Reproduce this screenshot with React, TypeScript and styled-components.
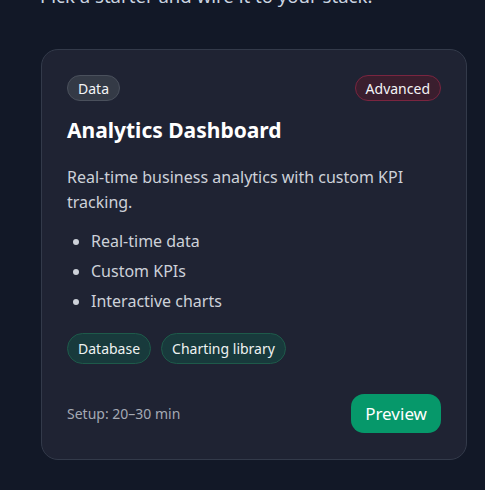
import React from "react";
import styled, { createGlobalStyle } from "styled-components";

const Global = createGlobalStyle`
  html, body { margin: 0; padding: 0; background: #121827; }
  body { font-family: "Noto Sans", "Open Sans", sans-serif; color: #e5e7eb; }
  * { box-sizing: border-box; }
`;

const Page = styled.div`
  display: flex;
  flex-direction: column;
  padding: 0 18px 30px 41px;
  margin-top: -16px;
`;

const Lead = styled.p`
  margin: 0 0 41px -1px;
  font-size: 18.6px;
  line-height: 24px;
  color: #cbd5e1;
`;

const Card = styled.div`
  width: 426px;
  background: #1f2333;
  border: 1px solid #333a4a;
  border-radius: 17px;
  padding: 25px 25px 26px;
  display: flex;
  flex-direction: column;
`;

const TopRow = styled.div`
  display: flex;
  justify-content: space-between;
  align-items: center;
`;

const Badge = styled.span<{ $tone: "neutral" | "danger" }>`
  display: inline-flex;
  align-items: center;
  height: 26px;
  padding: 0 10px;
  border-radius: 13px;
  font-size: 14px;
  color: #f3f4f6;
  background: ${(p) => (p.$tone === "danger" ? "#3a1e2e" : "#343a46")};
  border: 1px solid ${(p) => (p.$tone === "danger" ? "#7a2540" : "#4a505c")};
`;

const Title = styled.h2`
  margin: 15px 0 0 0;
  font-size: 21px;
  line-height: 29px;
  font-weight: 700;
  color: #ffffff;
`;

const Desc = styled.p`
  margin: 20px 0 0 0;
  font-size: 16px;
  line-height: 25px;
  color: #cdd1d9;
`;

const List = styled.ul`
  margin: 14px 0 0 0;
  padding: 0 0 0 24px;
  display: flex;
  flex-direction: column;
  gap: 6px;
`;

const Item = styled.li`
  font-size: 16px;
  line-height: 24px;
  color: #cdd1d9;
`;

const Tags = styled.div`
  display: flex;
  gap: 10px;
  margin-top: 20px;
`;

const Tag = styled.span`
  display: inline-flex;
  align-items: center;
  height: 31px;
  padding: 0 10px;
  border-radius: 16px;
  font-size: 14px;
  color: #eef2f1;
  background: #183a3c;
  border: 1px solid #1e5a4a;
`;

const Footer = styled.div`
  display: flex;
  justify-content: space-between;
  align-items: center;
  margin-top: 30px;
`;

const Setup = styled.span`
  font-size: 14px;
  color: #a4a9b3;
`;

const Button = styled.button`
  height: 39px;
  padding: 0 14px;
  border: none;
  border-radius: 13px;
  background: #06986a;
  color: #ffffff;
  font-family: inherit;
  font-size: 17px;
  cursor: pointer;
`;

export default function App() {
  return (
    <>
      <Global />
      <Page>
        <Lead>Pick a starter and wire it to your stack.</Lead>
        <Card>
          <TopRow>
            <Badge $tone="neutral">Data</Badge>
            <Badge $tone="danger">Advanced</Badge>
          </TopRow>
          <Title>Analytics Dashboard</Title>
          <Desc>Real-time business analytics with custom KPI tracking.</Desc>
          <List>
            <Item>Real-time data</Item>
            <Item>Custom KPIs</Item>
            <Item>Interactive charts</Item>
          </List>
          <Tags>
            <Tag>Database</Tag>
            <Tag>Charting library</Tag>
          </Tags>
          <Footer>
            <Setup>Setup: 20–30 min</Setup>
            <Button>Preview</Button>
          </Footer>
        </Card>
      </Page>
    </>
  );
}
